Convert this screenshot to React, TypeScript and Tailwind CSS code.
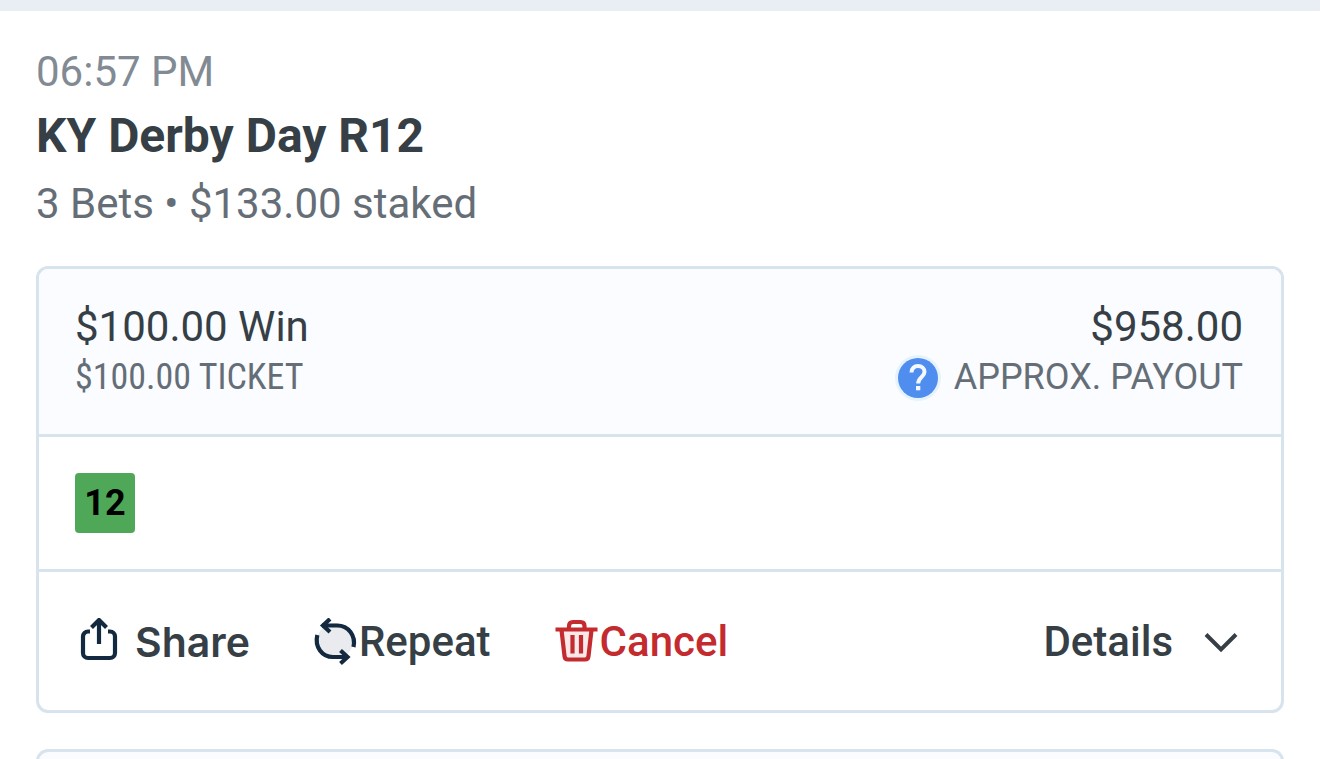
import React from 'react';

function ShareIcon() {
  return (
    <svg className="h-12 w-12 shrink-0" viewBox="0 0 48 48" fill="none" stroke="#12293f" strokeWidth="4.2" aria-hidden="true">
      <path d="M15 13.500H13A5 5 0 0 0 8 18.500V35A5 5 0 0 0 13 40H35A5 5 0 0 0 40 35V18.500A5 5 0 0 0 35 13.500H33" />
      <path d="M24 26V3M16.500 9.500L24 2L31.500 9.500" />
    </svg>
  );
}

function RepeatIcon() {
  return (
    <svg className="h-12 w-12 shrink-0" viewBox="0 0 48 48" fill="none" stroke="#12293f" strokeWidth="4.2" aria-hidden="true">
      <circle cx="24" cy="23" r="18" fill="#e9ebee" stroke="none" />
      <path d="M11 7.500H26C37.500 7.500 45 17.500 42.500 29" />
      <path d="M19 1L12 7.500L19 14" />
      <path d="M6.300 17C3.500 29 11 39 22 39H37" />
      <path d="M29.500 32.500L36.500 39L29.500 45.500" />
    </svg>
  );
}

function TrashIcon() {
  return (
    <svg className="h-12 w-12 shrink-0" viewBox="0 0 48 48" fill="none" stroke="#c42b2f" strokeWidth="4.2" aria-hidden="true">
      <path d="M9.500 12L12.500 38Q12.800 41.500 16 41.500H33Q36.200 41.500 36.500 38L39.500 12" fill="#fbe9ea" />
      <path d="M3.500 11.500H45.500" />
      <path d="M17 11V8Q17 4 21 4H28.500Q32.500 4 32.500 8V11" />
      <path d="M20.500 17V35.500M29 17V35.500" />
    </svg>
  );
}

function ChevronIcon() {
  return (
    <svg className="h-10 w-10 shrink-0" viewBox="0 0 40 40" fill="none" stroke="#363f46" strokeWidth="4" aria-hidden="true">
      <path d="M5 12.500L20 27.500L35 12.500" />
    </svg>
  );
}

function HelpIcon() {
  return (
    <svg className="h-12 w-12" viewBox="0 0 48 48" fill="none" aria-hidden="true">
      <circle cx="24" cy="24" r="23" fill="#e6f3fd" />
      <circle cx="24" cy="24" r="20" fill="#4f8dee" />
      <path d="M17.500 18.500C17.500 14.300 20.300 12 24 12C27.800 12 30.500 14.500 30.500 18C30.500 22.500 24.200 23.500 24.200 29.500" stroke="#f4f9ff" strokeWidth="4" />
      <rect x="22" y="32" width="4.300" height="4.300" fill="#f4f9ff" />
    </svg>
  );
}

export default function App() {
  return (
    <main className="h-screen overflow-hidden border-t-[11px] border-[#e9eef4] bg-white px-9 pt-[31px] font-[Roboto,sans-serif] text-[42px] text-[#363f46]">
      <header>
        <time className="block leading-[60px] text-[#828a93]">06:57 PM</time>
        <h1 className="text-5xl leading-[68px] font-bold">KY Derby Day R12</h1>
        <p className="leading-[68px] text-[#656e77]">3 Bets • $133.00 staked</p>
      </header>

      <article className="mt-7 overflow-hidden rounded-xl border-3 border-[#d7e3ed]">
        <div className="flex justify-between border-b-3 border-[#d7e3ed] bg-[#fafcff] pr-[38px] pl-9 pt-[33px] pb-[31px]">
          <div>
            <p className="leading-[50px]">$100.00 Win</p>
            <p className="font-['Roboto_Condensed',Roboto,sans-serif] text-4xl leading-[51px] text-[#656e77]">$100.00 TICKET</p>
          </div>
          <div className="text-right">
            <p className="leading-[50px]">$958.00</p>
            <div className="flex items-center gap-3 text-4xl leading-[51px] text-[#656e77]">
              <button type="button" aria-label="About approximate payout"><HelpIcon /></button>
              <span>APPROX. PAYOUT</span>
            </div>
          </div>
        </div>

        <div className="border-b-3 border-[#d7e3ed] p-9">
          <span className="flex size-[60px] items-center justify-center rounded-sm bg-[#4fa857] text-4xl font-bold text-black">12</span>
        </div>

        <div className="flex items-center justify-between pr-10 pl-9 pt-[45px] pb-[43px] leading-[50px] font-medium">
          <div className="flex items-center gap-[61px]">
            <button type="button" className="flex items-center gap-3"><ShareIcon /><span className="font-[Inter,sans-serif] text-[41px] font-semibold">Share</span></button>
            <button type="button" className="flex items-center"><RepeatIcon />Repeat</button>
            <button type="button" className="flex items-center text-[#c42b2f]"><TrashIcon />Cancel</button>
          </div>
          <button type="button" className="flex items-center gap-7"><span>Details</span><ChevronIcon /></button>
        </div>
      </article>

      <article className="mt-9 h-40 rounded-xl border-3 border-[#d7e3ed] bg-[#fafcff]" />
    </main>
  );
}
